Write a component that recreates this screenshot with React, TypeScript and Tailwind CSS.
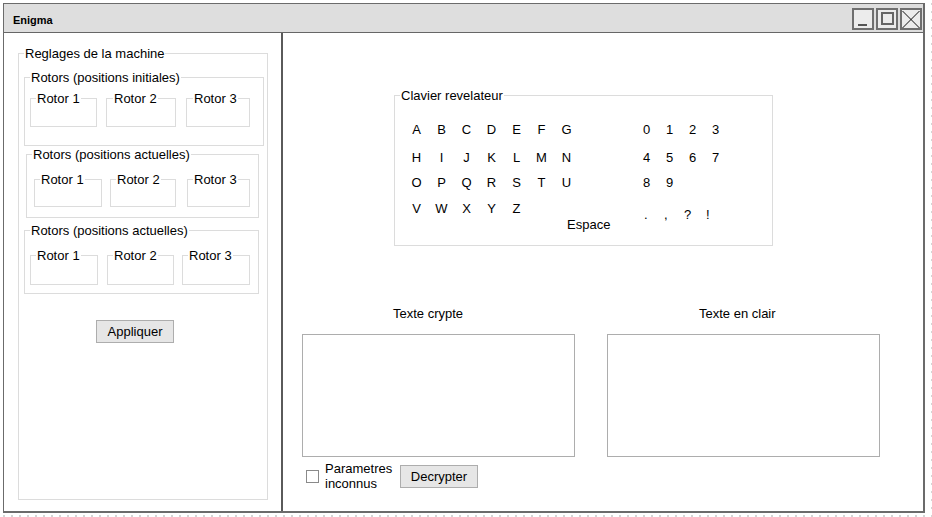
import React from "react";

function Rotor({ label, cls, pl }: { label: string; cls: string; pl: string }) {
  return (
    <fieldset className={`border border-[#dcdcdc] shrink-0 min-w-0 ${cls} ${pl}`}>
      <legend className="px-[1px] leading-[15px]">{label}</legend>
    </fieldset>
  );
}

const row1 = ["A", "B", "C", "D", "E", "F", "G"];
const row2 = ["H", "I", "J", "K", "L", "M", "N"];
const row3 = ["O", "P", "Q", "R", "S", "T", "U"];
const row4 = ["V", "W", "X", "Y", "Z"];

function Letters({ items }: { items: string[] }) {
  return (
    <div className="flex">
      {items.map((c) => (
        <span key={c} className="w-[25px] text-center leading-[15px]">
          {c}
        </span>
      ))}
    </div>
  );
}

function Numbers({ items }: { items: string[] }) {
  return (
    <div className="flex ml-[56px]">
      {items.map((c) => (
        <span key={c} className="w-[23px] text-center leading-[15px]">
          {c}
        </span>
      ))}
    </div>
  );
}

export default function App() {
  return (
    <div className="w-[932px] h-[517px] p-[3px] bg-white bg-[radial-gradient(circle,#d4d4d4_0.7px,transparent_1px)] bg-[length:8px_8px] font-['Liberation_Sans',Arial,sans-serif] text-[13px] text-black">
      <div className="w-[922px] h-[510px] bg-white border-t border-l border-r-2 border-b-2 border-[#6b6b6b] flex flex-col">
        {/* Title bar */}
        <div className="h-[29px] shrink-0 bg-[#dedede] border-b border-[#666] flex items-start pl-[9px] pr-[1px]">
          <span className="text-[11px] font-bold leading-[13px] mt-[10px]">Enigma</span>
          <div className="ml-auto flex gap-[2px] mt-[4px]">
            <div className="w-[22px] h-[22px] border-2 border-[#6f6f6f] bg-[#ececec]">
              <svg width="18" height="18" viewBox="0 0 18 18">
                <line x1="4" y1="15" x2="13" y2="15" stroke="#555" strokeWidth="2" />
              </svg>
            </div>
            <div className="w-[22px] h-[22px] border-2 border-[#6f6f6f] bg-[#ececec]">
              <svg width="18" height="18" viewBox="0 0 18 18">
                <rect x="4" y="3" width="11" height="11" fill="none" stroke="#666" strokeWidth="2" />
              </svg>
            </div>
            <div className="w-[22px] h-[22px] border-2 border-[#6f6f6f] bg-[#ececec]">
              <svg width="18" height="18" viewBox="0 0 18 18">
                <line x1="0.5" y1="1" x2="17.5" y2="18" stroke="#111" strokeWidth="1" />
                <line x1="17.5" y1="1" x2="0.5" y2="18" stroke="#111" strokeWidth="1" />
              </svg>
            </div>
          </div>
        </div>

        {/* Body */}
        <div className="flex flex-1">
          {/* Left pane */}
          <div className="w-[279px] shrink-0 border-r-2 border-[#5a5a5a] pt-[13px] pl-[14px]">
            <fieldset className="w-[250px] min-w-0 h-[454px] border border-[#dcdcdc] pl-[5px] pr-[3px]">
              <legend className="px-[1px] leading-[15px]">Reglages de la machine</legend>

              <fieldset className="mt-[9px] w-[240px] min-w-0 border border-[#dcdcdc] px-[5px] pb-[18px]">
                <legend className="px-[1px] leading-[15px]">Rotors (positions initiales)</legend>
                <div className="flex mt-[6px]">
                  <Rotor label="Rotor 1" cls="w-[67px] h-[36px]" pl="pl-[5px]" />
                  <Rotor label="Rotor 2" cls="ml-[9px] w-[70px] h-[36px]" pl="pl-[6px]" />
                  <Rotor label="Rotor 3" cls="ml-[10px] w-[64px] h-[36px]" pl="pl-[6px]" />
                </div>
              </fieldset>

              <fieldset className="mt-[1px] ml-[2px] w-[233px] min-w-0 border border-[#dcdcdc] px-[5px] pb-[10px]">
                <legend className="px-[1px] leading-[15px]">Rotors (positions actuelles)</legend>
                <div className="flex mt-[10px]">
                  <Rotor label="Rotor 1" cls="ml-[2px] w-[68px] h-[35px]" pl="pl-[5px]" />
                  <Rotor label="Rotor 2" cls="ml-[8px] w-[66px] h-[35px]" pl="pl-[5px]" />
                  <Rotor label="Rotor 3" cls="ml-[11px] w-[63px] h-[35px]" pl="pl-[5px]" />
                </div>
              </fieldset>

              <fieldset className="mt-[5px] w-[235px] min-w-0 border border-[#dcdcdc] px-[5px] pb-[8px]">
                <legend className="px-[1px] leading-[15px]">Rotors (positions actuelles)</legend>
                <div className="flex mt-[10px]">
                  <Rotor label="Rotor 1" cls="w-[68px] h-[37px]" pl="pl-[5px]" />
                  <Rotor label="Rotor 2" cls="ml-[9px] w-[67px] h-[37px]" pl="pl-[5px]" />
                  <Rotor label="Rotor 3" cls="ml-[8px] w-[68px] h-[37px]" pl="pl-[5px]" />
                </div>
              </fieldset>

              <button className="mt-[26px] ml-[72px] w-[78px] h-[23px] bg-[#e6e6e6] border border-[#adadad] leading-[15px] text-center">
                Appliquer
              </button>
            </fieldset>
          </div>

          {/* Right pane */}
          <div className="flex-1 pt-[55px]">
            <fieldset className="ml-[111px] w-[379px] h-[158px] border border-[#dcdcdc] px-[5px]">
              <legend className="px-[1px] leading-[15px]">Clavier revelateur</legend>
              <div className="ml-[4px] mt-[19px]">
                <div className="flex h-[28px]">
                  <Letters items={row1} />
                  <Numbers items={["0", "1", "2", "3"]} />
                </div>
                <div className="flex h-[25px]">
                  <Letters items={row2} />
                  <Numbers items={["4", "5", "6", "7"]} />
                </div>
                <div className="flex h-[26px]">
                  <Letters items={row3} />
                  <Numbers items={["8", "9"]} />
                </div>
                <div className="flex items-start">
                  <Letters items={row4} />
                  <div className="ml-[38px] mt-[16px] w-[50px] leading-[15px]">Espace</div>
                  <div className="ml-[27px] mt-[6px] flex leading-[15px]">
                    <span className="w-[20px]">.</span>
                    <span className="w-[20px]">,</span>
                    <span className="w-[22px]">?</span>
                    <span>!</span>
                  </div>
                </div>
              </div>
            </fieldset>

            <div className="mt-[60px] ml-[19px] flex gap-[32px]">
              <div className="w-[273px]">
                <div className="ml-[91px] leading-[15px]">Texte crypte</div>
                <div className="mt-[13px] h-[123px] border border-[#adadad] bg-white" />
                <div className="flex items-start mt-[4px]">
                  <div className="ml-[4px] mt-[9px] w-[13px] h-[13px] border border-[#8a8a8a] bg-white shrink-0" />
                  <div className="ml-[6px] w-[75px] leading-[15px] shrink-0">
                    Parametres
                    <br />
                    inconnus
                  </div>
                  <button className="mt-[4px] w-[78px] h-[23px] bg-[#e6e6e6] border border-[#adadad] leading-[15px] text-center">
                    Decrypter
                  </button>
                </div>
              </div>
              <div className="w-[273px]">
                <div className="ml-[92px] leading-[15px]">Texte en clair</div>
                <div className="mt-[13px] h-[123px] border border-[#adadad] bg-white" />
              </div>
            </div>
          </div>
        </div>
      </div>
    </div>
  );
}
